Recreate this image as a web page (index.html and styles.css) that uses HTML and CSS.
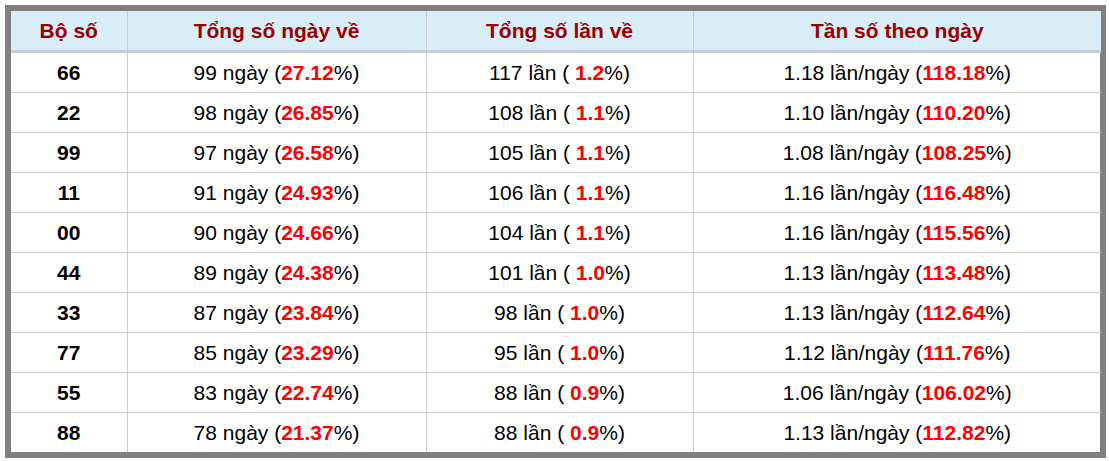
FILE: index.html
```html
<!DOCTYPE html>
<html lang="vi">
<head>
<meta charset="utf-8">
<link rel="stylesheet" href="styles.css">
</head>
<body>
<div class="frame">
<table class="stats">
<colgroup><col class="c1"><col class="c2"><col class="c3"><col class="c4"></colgroup>
<thead>
<tr><th>Bộ số</th><th>Tổng số ngày về</th><th>Tổng số lần về</th><th>Tần số theo ngày</th></tr>
</thead>
<tbody>
<tr><td class="num">66</td><td>99 ngày (<b>27.12</b>%)</td><td>117 lần ( <b>1.2</b>%)</td><td>1.18 lần/ngày (<b>118.18</b>%)</td></tr>
<tr><td class="num">22</td><td>98 ngày (<b>26.85</b>%)</td><td>108 lần ( <b>1.1</b>%)</td><td>1.10 lần/ngày (<b>110.20</b>%)</td></tr>
<tr><td class="num">99</td><td>97 ngày (<b>26.58</b>%)</td><td>105 lần ( <b>1.1</b>%)</td><td>1.08 lần/ngày (<b>108.25</b>%)</td></tr>
<tr><td class="num">11</td><td>91 ngày (<b>24.93</b>%)</td><td>106 lần ( <b>1.1</b>%)</td><td>1.16 lần/ngày (<b>116.48</b>%)</td></tr>
<tr><td class="num">00</td><td>90 ngày (<b>24.66</b>%)</td><td>104 lần ( <b>1.1</b>%)</td><td>1.16 lần/ngày (<b>115.56</b>%)</td></tr>
<tr><td class="num">44</td><td>89 ngày (<b>24.38</b>%)</td><td>101 lần ( <b>1.0</b>%)</td><td>1.13 lần/ngày (<b>113.48</b>%)</td></tr>
<tr><td class="num">33</td><td>87 ngày (<b>23.84</b>%)</td><td>98 lần ( <b>1.0</b>%)</td><td>1.13 lần/ngày (<b>112.64</b>%)</td></tr>
<tr><td class="num">77</td><td>85 ngày (<b>23.29</b>%)</td><td>95 lần ( <b>1.0</b>%)</td><td>1.12 lần/ngày (<b>111.76</b>%)</td></tr>
<tr><td class="num">55</td><td>83 ngày (<b>22.74</b>%)</td><td>88 lần ( <b>0.9</b>%)</td><td>1.06 lần/ngày (<b>106.02</b>%)</td></tr>
<tr><td class="num">88</td><td>78 ngày (<b>21.37</b>%)</td><td>88 lần ( <b>0.9</b>%)</td><td>1.13 lần/ngày (<b>112.82</b>%)</td></tr>
</tbody>
</table>
</div>
</body>
</html>
```

FILE: styles.css
```css
html, body {
  margin: 0;
  padding: 0;
  background: #fff;
}
body {
  padding: 5px 3px 4px 5px;
  font-family: "Liberation Sans", Arial, sans-serif;
  font-size: 21px;
  color: #000;
}
.frame {
  width: 1089px;
  border: 6px solid #808080;
  background: #fff;
}
.stats {
  width: 1090px;
  border-collapse: collapse;
  table-layout: fixed;
}
.c1 { width: 116px; }
.c2 { width: 299px; }
.c3 { width: 267px; }
.c4 { width: 408px; }
.stats th {
  background: #d9edf7;
  color: #990000;
  font-weight: bold;
  height: 39px;
  padding: 0;
  text-align: center;
  line-height: 24px;
  border-left: 1px solid #ccc;
  border-bottom: 3px solid #ccc;
}
.stats td {
  height: 39px;
  padding: 0;
  text-align: center;
  line-height: 24px;
  border-left: 1px solid #ccc;
  border-top: 1px solid #ccc;
}
.stats th:first-child, .stats td:first-child { border-left: none; }
.stats tbody tr:first-child td { border-top: none; }
.stats td.num { font-weight: bold; }
.stats b { color: #ff0000; font-weight: bold; }
```
